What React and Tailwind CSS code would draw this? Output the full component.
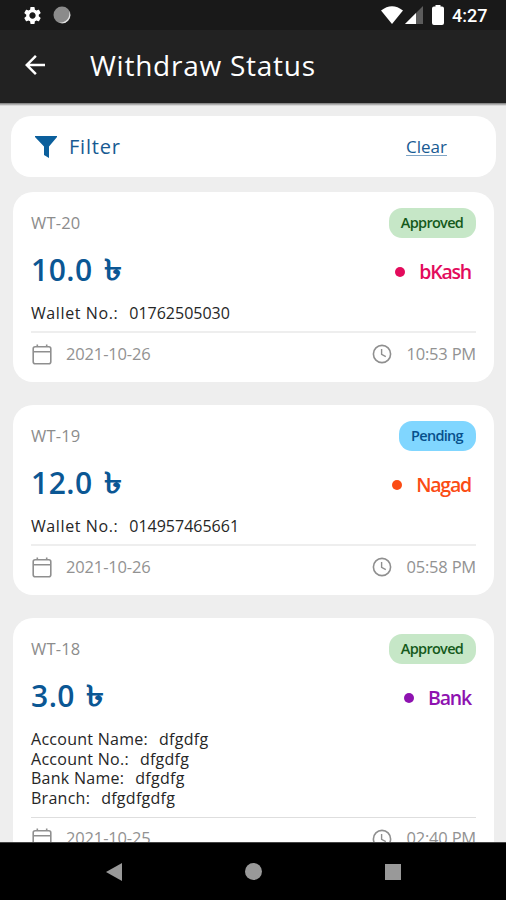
import { MdSettings, MdArrowBack } from "react-icons/md";

const withdrawals = [
  {
    id: "WT-20", status: "Approved", amount: "10.0", method: "bKash", color: "text-[#e30b5c]",
    details: [["Wallet No.:", "01762505030"]],
    date: "2021-10-26", time: "10:53 PM",
  },
  {
    id: "WT-19", status: "Pending", amount: "12.0", method: "Nagad", color: "text-[#fb4c14]",
    details: [["Wallet No.:", "014957465661"]],
    date: "2021-10-26", time: "05:58 PM",
  },
  {
    id: "WT-18", status: "Approved", amount: "3.0", method: "Bank", color: "text-[#8e12b0]",
    details: [["Account Name:", "dfgdfg"], ["Account No.:", "dfgdfg"], ["Bank Name:", "dfgdfg"], ["Branch:", "dfgdfgdfg"]],
    date: "2021-10-25", time: "02:40 PM",
  },
];

function CalendarIcon() {
  return (
    <svg className="h-[21px] w-5 shrink-0" viewBox="0 0 20 21" fill="none" stroke="#8f8f8f" strokeWidth="1.6">
      <rect x="1.2" y="2.7" width="17.6" height="17" rx="2" />
      <path d="M1.2 7.7h17.6M5.3 0.5v2.4M14.7 0.5v2.4" />
    </svg>
  );
}

function ClockIcon() {
  return (
    <svg className="h-5 w-5 shrink-0" viewBox="0 0 20 20" fill="none" stroke="#8f8f8f" strokeWidth="1.6">
      <circle cx="10" cy="10" r="8.6" />
      <path d="M9.6 5v5.3l4.2 2.3" strokeWidth="1.4" />
    </svg>
  );
}

function StatusBadge({ status }) {
  const tone = status === "Approved" ? "bg-[#c6e7c7] text-[#155a1b] w-[87px]" : "bg-[#80d6ff] text-[#07508c] w-[77px]";
  return (
    <span className={`flex h-[30px] items-center justify-center rounded-[13px] pr-px text-[14.5px] font-semibold tracking-[-0.7px] ${tone}`}>
      {status}
    </span>
  );
}

function WithdrawCard({ item }) {
  const long = item.details.length > 1;
  return (
    <article className="mr-3 ml-[13px] shrink-0 rounded-[20px] bg-white px-[18px] py-4">
      <div className="flex h-[30px] items-center justify-between">
        <span className="text-[16.5px] tracking-[0.2px] text-[#8c8c8c]">{item.id}</span>
        <StatusBadge status={item.status} />
      </div>
      <div className="mt-3 flex h-[42px] items-center justify-between">
        <span className="-mt-[3px] flex items-center text-[30px] font-semibold tracking-[0.5px] text-[#0b5794]">
          {item.amount}
          <span className="-mt-px ml-[11px] inline-block origin-left scale-x-125 text-[29px] leading-[40px] font-bold">৳</span>
        </span>
        <span className={`mt-[2px] flex items-center gap-[14px] pr-[5px] text-[19.5px] font-semibold tracking-[-1.2px] ${item.color}`}>
          <i className="h-[10px] w-[10px] rounded-full bg-current" />
          {item.method}
        </span>
      </div>
      <div className={long ? "mt-3" : "mt-[11px]"}>
        {item.details.map(([label, value]) => (
          <p key={label} className={`text-[16px] whitespace-nowrap text-[#262626] ${long ? "leading-[19.7px] tracking-[0.27px]" : "leading-[20px]"}`}>
            <span className={long ? "" : "tracking-[0.6px]"}>{label}</span>
            <span className="ml-[11px]">{value}</span>
          </p>
        ))}
      </div>
      <div className={long ? "mt-[8px] h-px bg-[#dedede]" : "mt-[8px] h-[2px] bg-[#eeeeee]"} />
      <div className="mt-[9px] flex h-6 items-center justify-between text-[16.5px] text-[#929292]">
        <span className="flex items-center gap-[14px] pl-px tracking-[-0.15px]">
          <CalendarIcon />
          {item.date}
        </span>
        <span className="flex items-center gap-[14.5px] tracking-[-0.2px]">
          <ClockIcon />
          {item.time}
        </span>
      </div>
    </article>
  );
}

export default function App() {
  return (
    <div className="flex h-[900px] w-[506px] flex-col overflow-hidden bg-[#eeeeee] font-['Open_Sans','Noto_Sans',sans-serif]">
      <div className="flex h-[30px] shrink-0 items-center bg-[#191919] pl-[22px] text-white">
        <MdSettings className="h-[21px] w-[21px]" />
        <svg className="ml-[10px] h-[18px] w-[18px]" viewBox="0 0 18 18">
          <circle cx="9" cy="9" r="8.5" fill="#8b8b8b" />
          <path d="M16 5a8 8 0 0 1-10 11.5A9 9 0 0 0 16 5" fill="#e5e5e5" />
        </svg>
        <svg className="ml-[310px] h-[18px] w-[22px]" viewBox="0 0 22 18" fill="white">
          <path d="M0 4.5Q11-4 22 4.5L11 18Z" />
        </svg>
        <svg className="ml-[2px] h-[18px] w-[18px]" viewBox="0 0 18 18">
          <path d="M18 0V18H0Z" fill="#5c5c5c" />
          <path d="M11 7V18H0Z" fill="white" />
        </svg>
        <svg className="ml-[9px] h-[20px] w-[12px]" viewBox="0 0 12 20" fill="white">
          <path d="M3.5 0h5v1.5H10a2 2 0 0 1 2 2v14.5a2 2 0 0 1-2 2H2a2 2 0 0 1-2-2V3.500a2 2 0 0 1 2-2h1.5Z" />
        </svg>
        <span className="mt-[2px] ml-[8px] font-['Roboto',sans-serif] text-[18px] leading-none font-medium">4:27</span>
      </div>
      <header className="flex h-[73px] shrink-0 items-center bg-[#222222] pl-5 text-white">
        <MdArrowBack className="-mt-1 h-[30px] w-[30px]" />
        <h1 className="-mt-1 ml-10 text-[28px] font-medium tracking-[0.75px] whitespace-nowrap">Withdraw Status</h1>
      </header>
      <div className="h-[3px] shrink-0 bg-gradient-to-b from-[#777777] to-[#eeeeee]" />
      <main className="flex min-h-0 flex-1 flex-col overflow-hidden pt-[10px]">
        <section className="mr-[10px] ml-[11px] flex h-[61px] shrink-0 items-center rounded-[20px] bg-white pr-[49px] pl-6 text-[#175a92]">
          <svg className="h-[22px] w-[22px]" viewBox="0 0 22 22" fill="#0b5f9c">
            <path d="M0 0H22V1L14 10.500V22L9 19V10.500L0 1Z" />
          </svg>
          <span className="ml-3 text-[20px] tracking-[0.8px]">Filter</span>
          <span className="ml-auto text-[17px] underline decoration-[#7fa5c6] underline-offset-2">Clear</span>
        </section>
        <div className="mt-[15px] flex flex-col gap-[23px]">
          {withdrawals.map((item) => <WithdrawCard key={item.id} item={item} />)}
        </div>
      </main>
      <nav className="flex h-[58px] shrink-0 items-center border-t border-[#444444] bg-black pl-[106px]">
        <svg className="h-[18px] w-[16px]" viewBox="0 0 16 18" fill="#999999"><path d="M16 0V18L0 9Z" /></svg>
        <i className="ml-[123px] h-[17px] w-[17px] rounded-full bg-[#999999]" />
        <i className="ml-[123px] h-4 w-4 bg-[#999999]" />
      </nav>
    </div>
  );
}
